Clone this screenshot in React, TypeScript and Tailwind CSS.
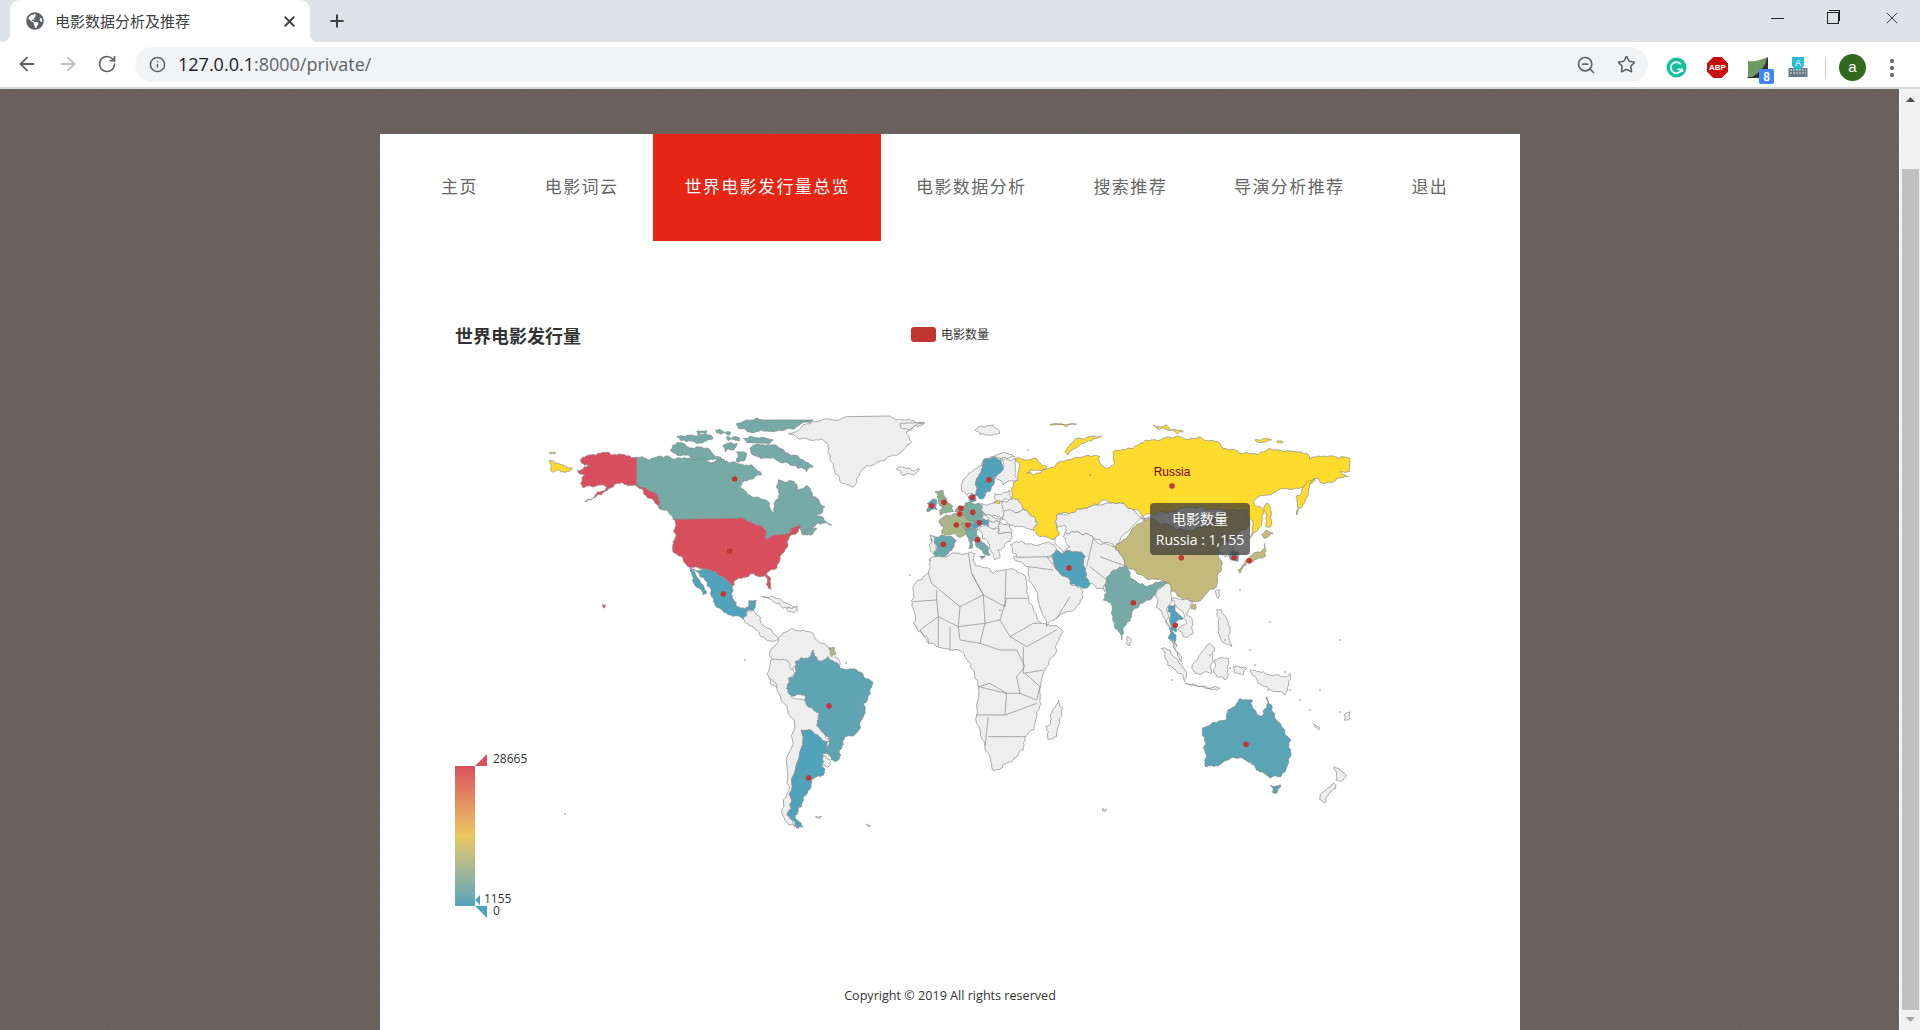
import { ArrowLeft, ArrowRight, RotateCw, Info, ZoomOut, Star, X, Plus } from "lucide-react";
import { FaGlobeAmericas } from "react-icons/fa";

type Shape = { fill: string; pts: string };

const GREY = "#eeeeee";
const RED = "#d94e5d";
const BLUE = "#50a3ba";
const BRAZIL = "#5fa4b3";
const TEAL = "#75aaa7";
const YELLOW = "#ffdb2e";
const OLIVE = "#c2b97a";

// coordinates read off the crops, each group has its own scale
const america: Shape[] = [
    { fill: TEAL, pts: "320,172 360,180 415,168 470,175 530,182 580,180 600,188 650,195 680,210 695,225 655,240 630,262 650,280 690,295 720,310 725,335 735,335 738,300 745,290 740,262 745,240 780,240 800,255 805,270 830,255 850,290 885,320 860,345 905,375 860,370 820,405 810,372 780,395 745,405 710,420 708,392 680,375 625,355 430,358 415,335 385,320 365,295 340,265 320,258" },
    { fill: TEAL, pts: "420,150 445,128 500,140 540,150 585,180 530,180 480,170 430,158" },
    { fill: TEAL, pts: "440,110 480,105 550,115 520,128 470,125" },
    { fill: TEAL, pts: "620,70 700,60 850,60 800,80 730,95 680,95 625,85" },
    { fill: TEAL, pts: "555,90 600,95 600,105 560,100" },
    { fill: TEAL, pts: "640,115 730,120 720,130 650,128" },
    { fill: TEAL, pts: "660,145 690,135 750,145 820,180 850,200 830,215 780,195 720,175 670,165" },
    { fill: TEAL, pts: "580,135 620,130 610,150 585,155" },
    { fill: TEAL, pts: "620,155 650,160 645,180 620,185" },
    { fill: TEAL, pts: "590,110 625,112 630,122 595,122" },
    { fill: TEAL, pts: "500,95 530,92 528,100 503,102" },
    { fill: TEAL, pts: "820,395 860,385 850,400 825,405" },
    { fill: GREY, pts: "775,100 850,65 950,50 1080,48 1120,60 1185,68 1130,95 1145,125 1090,165 1050,185 1000,205 970,260 940,250 915,220 900,165 880,120 820,115" },
    { fill: GREY, pts: "1100,208 1130,205 1170,208 1150,225 1120,228" },
    { fill: RED, pts: "320,172 320,258 290,255 262,250 245,262 215,285 165,305 195,285 232,262 210,255 180,258 157,262 155,245 165,225 142,210 185,200 150,180 180,165 215,158 260,165" },
    { fill: RED, pts: "430,358 625,355 680,375 708,392 710,420 745,405 780,395 810,372 805,395 775,420 765,450 750,470 745,490 710,520 722,550 725,568 715,565 705,525 660,522 625,535 607,560 590,540 565,525 540,510 480,502 440,462 430,430 435,385" },
    { fill: RED, pts: "320,258 345,262 385,300 395,330 365,295 340,272" },
    { fill: RED, pts: "218,612 228,616 224,624 218,620" },
    { fill: YELLOW, pts: "60,180 100,195 128,205 105,218 85,210 62,212" },
    { fill: YELLOW, pts: "60,156 75,156 75,162 60,162" },
    { fill: BLUE, pts: "478,503 540,510 565,525 590,540 607,560 612,600 635,625 655,620 655,603 680,602 672,630 650,635 640,658 610,650 570,625 545,590 510,530 490,510" },
    { fill: BLUE, pts: "482,505 500,530 530,580 520,585 490,535" },
    { fill: GREY, pts: "640,658 650,635 672,632 690,650 705,680 735,705 745,715 730,725 705,715 680,690 650,670" },
    { fill: GREY, pts: "695,590 730,590 770,610 800,620 800,630 760,625 730,605" },
    { fill: GREY, pts: "770,625 800,618 803,632 772,632" },
    { fill: GREY, pts: "745,720 770,695 785,685 810,695 850,700 860,720 905,745 915,770 930,795 800,790 770,850 760,900 720,850 735,790 720,770" },
];

const south: Shape[] = [
    { fill: GREY, pts: "75,60 115,60 135,100 115,135 130,175 195,180 200,260 220,300 210,320 150,270 128,440 115,525 145,565 120,555 102,510 115,430 133,240 100,180 72,115" },
    { fill: GREY, pts: "200,345 222,365 215,382 198,375" },
    { fill: BRAZIL, pts: "135,65 165,55 180,30 190,60 215,50 240,70 245,85 290,95 325,125 320,160 302,190 300,235 288,275 255,290 250,320 232,365 205,340 218,310 215,290 195,265 195,220 160,185 155,165 130,170 113,145 118,115 135,100" },
    { fill: "#b3b67f", pts: "218,25 230,22 235,40 225,50" },
    { fill: BLUE, pts: "150,270 175,270 195,290 215,305 205,340 200,375 205,405 175,420 175,440 155,470 150,500 135,535 155,562 135,555 115,525 128,440" },
    { fill: GREY, pts: "780,180 790,205 775,290 755,298 750,260 765,210" },
    { fill: "#5ba4b5", pts: "1225,175 1255,180 1255,200 1280,228 1290,170 1310,220 1350,300 1350,340 1325,410 1300,415 1265,390 1260,375 1215,355 1170,378 1140,380 1140,340 1132,265 1190,240 1195,210" },
    { fill: "#5ba4b5", pts: "1300,435 1325,435 1315,460 1305,458" },
    { fill: GREY, pts: "1455,380 1485,410 1470,425 1460,420" },
    { fill: GREY, pts: "1455,430 1460,445 1432,490 1420,478" },
    { fill: GREY, pts: "1405,250 1420,262 1418,270 1408,260" },
    { fill: GREY, pts: "1480,225 1495,215 1490,240 1480,240" },
    { fill: GREY, pts: "888,505 898,508 895,514 888,512" },
    { fill: GREY, pts: "185,530 200,530 195,536" },
    { fill: GREY, pts: "310,552 320,558 318,560" },
];

const eurasia: Shape[] = [
    { fill: GREY, pts: "100,440 130,440 205,430 225,430 225,465 280,490 320,480 365,490 372,495 382,530 425,640 490,665 470,720 430,790 420,870 410,920 400,960 377,980 370,1020 340,1050 280,1082 255,1010 230,915 235,830 220,780 175,720 150,720 85,700 40,640 35,570 45,520 85,490" },
    { fill: GREY, pts: "340,440 440,440 460,450 480,490 510,520 550,545 540,580 470,625 440,650 395,520 385,470" },
    { fill: GREY, pts: "465,320 530,300 570,290 650,280 700,300 735,325 645,410 610,400 580,385 530,365 480,370 470,350" },
    { fill: GREY, pts: "480,370 530,365 580,385 645,410 680,470 640,480 620,510 615,545 570,520 555,480 555,440 525,425 490,430 480,410" },
    { fill: "#ffffff", pts: "470,350 495,345 490,380 510,410 490,425 475,410" },
    { fill: GREY, pts: "225,60 280,45 300,70 260,75" },
    { fill: GREY, pts: "0,40 70,38 30,60 5,55" },
    { fill: YELLOW, pts: "345,145 400,145 440,170 380,190 400,195 480,155 500,150 600,140 600,160 620,175 640,165 640,125 700,115 720,100 790,85 900,80 960,100 1020,130 1090,125 1150,125 1220,130 1230,150 1280,140 1350,145 1350,185 1320,185 1345,200 1300,215 1270,222 1245,205 1225,235 1185,235 1130,245 1060,275 1090,300 1085,340 1060,370 1050,385 1055,330 1040,300 975,300 900,290 860,300 800,310 730,320 700,300 650,280 610,270 570,290 530,300 470,315 465,340 480,370 460,390 400,360 415,340 385,310 340,270 335,235 355,205" },
    { fill: YELLOW, pts: "1245,205 1225,250 1190,315 1188,260 1215,225" },
    { fill: YELLOW, pts: "495,125 520,95 605,78 560,95 520,115 505,135" },
    { fill: YELLOW, pts: "760,45 800,45 815,60 770,55" },
    { fill: YELLOW, pts: "815,60 850,65 830,70" },
    { fill: YELLOW, pts: "450,45 530,42 500,50" },
    { fill: YELLOW, pts: "1065,90 1115,90 1090,97" },
    { fill: YELLOW, pts: "1130,95 1150,95 1145,99" },
    { fill: YELLOW, pts: "1095,285 1105,280 1112,350 1098,350" },
    { fill: GREY, pts: "725,325 800,310 900,290 975,300 930,340 850,360 780,345 745,325" },
    { fill: OLIVE, pts: "645,410 680,385 720,340 745,325 780,345 850,360 930,340 975,300 1040,300 1050,345 990,390 955,410 965,480 950,530 890,575 850,570 810,540 800,515 745,510 680,470" },
    { fill: GREY, pts: "955,410 990,390 1005,395 1000,420 975,440" },
    { fill: "#5ba4b5", pts: "1000,420 1015,430 1012,455 993,450" },
    { fill: OLIVE, pts: "1015,480 1050,440 1085,425 1095,400 1095,440 1060,455 1030,470 1020,490" },
    { fill: OLIVE, pts: "1085,375 1100,360 1120,370 1095,385" },
    { fill: BLUE, pts: "445,415 470,420 490,430 525,425 555,440 555,480 570,520 555,535 510,520 480,490 460,450" },
    { fill: TEAL, pts: "640,480 680,470 690,505 740,530 750,525 800,515 770,540 745,570 700,600 680,640 665,690 645,640 635,585 610,570 620,510" },
    { fill: GREY, pts: "680,680 695,690 690,708 680,700" },
    { fill: GREY, pts: "770,545 805,520 815,575 800,600 810,660 790,620 770,590" },
    { fill: GREY, pts: "815,565 880,575 860,610 880,645 880,670 850,680 835,660 860,640 850,610 825,585" },
    { fill: BLUE, pts: "803,590 825,585 850,625 825,640 830,665 815,660 830,710 805,685 810,640" },
    { fill: GREY, pts: "815,690 845,740 845,755 825,720" },
    { fill: GREY, pts: "785,715 810,720 860,800 855,815 820,775" },
    { fill: GREY, pts: "880,760 930,700 945,720 935,790 885,790" },
    { fill: GREY, pts: "855,820 960,835 900,830" },
    { fill: GREY, pts: "945,750 985,745 975,810 950,800" },
    { fill: GREY, pts: "950,600 965,600 990,660 995,710 975,700 955,650" },
    { fill: GREY, pts: "1050,780 1090,785 1160,800 1170,790 1155,855 1100,830 1075,820" },
    { fill: GREY, pts: "1000,770 1040,775 1030,795 1005,790" },
    { fill: GREY, pts: "950,540 962,540 955,565" },
    { fill: OLIVE, pts: "875,585 887,582 885,600 875,598" },
];

const europe: Shape[] = [
    { fill: GREY, pts: "123,45 145,10 190,-25 240,-50 285,-40 240,-35 190,-30 170,25 168,75 140,75" },
    { fill: GREY, pts: "240,-35 285,-35 295,30 250,45 225,25 250,-5" },
    { fill: BLUE, pts: "170,25 190,-30 240,-30 250,-5 220,20 210,65 190,85 168,75" },
    { fill: "#8fb08f", pts: "45,65 65,60 75,80 95,105 100,125 60,135 70,110 55,90" },
    { fill: "#5ba4b5", pts: "22,100 50,90 50,120 22,125" },
    { fill: "#a9b688", pts: "58,150 105,130 130,135 145,150 135,175 145,190 125,200 100,190 75,195 65,190 72,170" },
    { fill: "#77ab9f", pts: "135,100 180,100 190,130 175,155 150,160 145,150 130,135" },
    { fill: "#8daf96", pts: "105,125 115,108 135,105 135,130" },
    { fill: "#93b092", pts: "125,160 150,160 155,175 135,178" },
    { fill: BLUE, pts: "150,160 205,150 205,170 160,175" },
    { fill: "#6fa9a8", pts: "135,178 160,175 175,178 170,195 205,240 210,255 190,250 165,215 145,205" },
    { fill: "#6fa9a8", pts: "145,210 155,210 155,235 146,235" },
    { fill: "#6fa9a8", pts: "178,258 195,258 185,268" },
    { fill: "#65a7ad", pts: "30,197 75,197 110,212 85,245 65,260 42,255 45,220" },
    { fill: GREY, pts: "30,197 43,200 45,225 42,250 30,240" },
    { fill: BLUE, pts: "145,80 165,72 168,92 150,95" },
    { fill: GREY, pts: "185,100 245,95 255,130 245,145 195,135" },
    { fill: GREY, pts: "225,70 270,60 280,90 245,95 225,88" },
    { fill: YELLOW, pts: "220,97 240,93 240,100 222,100" },
    { fill: GREY, pts: "245,95 280,85 315,120 300,125 255,125" },
    { fill: GREY, pts: "250,130 300,125 315,120 350,160 340,180 300,170 270,165 245,150" },
    { fill: GREY, pts: "190,135 245,145 240,155 205,150" },
    { fill: GREY, pts: "205,170 205,150 240,155 235,175 210,180" },
    { fill: GREY, pts: "240,155 270,165 275,190 235,190" },
    { fill: GREY, pts: "175,178 205,170 235,175 235,190 275,190 270,215 235,240 240,262 225,270 210,225" },
    { fill: GREY, pts: "270,225 290,215 340,225 385,215 410,235 385,260 290,262" },
];

const africaBorders =
    "M85 490L95 520L180 590L250 555L215 490L205 430M215 490L250 555L315 590L318 480M320 565L385 565M320 565L300 630L330 680L400 640L425 640M40 575L110 570L115 620L60 660M110 540L110 570M180 590L175 650L115 620M250 555L255 640L175 650M255 640L300 630M175 650L180 690L240 700L255 640M330 680L380 710L470 660M370 710L370 790L430 780M240 700L300 720L350 720L375 770L350 800L360 850L320 850L270 820L235 830M235 830L320 850L315 915L230 915M375 790L420 830L410 870L360 850M315 915L370 895L410 880M265 920L255 1010M265 980L340 980L377 980M60 660L85 700M115 620L115 710M150 650L150 720M440 440L480 490M385 470L460 480M470 625L510 560M580 385L560 470M600 440L680 470M620 510L570 470";

// [x, y] in page pixels
const dots = [
    [734.7, 479], [729.7, 551.3], [723.3, 594], [829, 706], [808.6, 778], [1246, 744.3],
    [1172, 486], [1181.3, 557.7], [1234, 557.7], [1249.3, 560.7], [1069, 568], [1133.3, 602.7], [1175.3, 625.3],
    [931.7, 505.7], [944, 502.3], [961, 508.3], [959.7, 514], [972.7, 512.3], [956.3, 525], [968, 525],
    [979.3, 522.7], [977.7, 539.7], [943.3, 544.3], [972.3, 497.3], [989, 479.7],
];

const specks = [
    [846, 663], [565, 814], [1028, 450], [1240, 590], [1270, 622], [1340, 640], [1300, 700], [1320, 690],
    [1090, 475], [930, 560], [910, 575], [1000, 610], [1255, 665], [1285, 672], [1225, 640], [1250, 650],
    [1268, 690], [1290, 690], [1310, 710], [1340, 712], [1230, 668], [1210, 655], [745, 660], [1172, 680],
];

function noise(a: number, b: number) {
    const v = Math.sin(a * 12.9898 + b * 78.233) * 43758.5453;
    return v - Math.floor(v) - 0.5;
}

// midpoint displacement, so straight edges read as coastline; same result from both ends of a shared edge
function roughen(ax: number, ay: number, bx: number, by: number, depth: number): number[][] {
    const len = Math.hypot(bx - ax, by - ay);
    if (depth === 0 || len < 5) return [];
    const flip = ax > bx || (ax === bx && ay > by);
    const [x0, y0, x1, y1] = flip ? [bx, by, ax, ay] : [ax, ay, bx, by];
    const amp = Math.min(len * 0.22, 7) * noise(x0 + x1, y0 + y1 + depth) * 2;
    const mx = (x0 + x1) / 2 - ((y1 - y0) / len) * amp;
    const my = (y0 + y1) / 2 + ((x1 - x0) / len) * amp;
    return [...roughen(ax, ay, mx, my, depth - 1), [mx, my], ...roughen(mx, my, bx, by, depth - 1)];
}

function coast(pts: string) {
    const list = pts.split(" ").map((p) => p.split(",").map(Number));
    const out: number[][] = [];
    list.forEach(([x, y], i) => {
        const [nx, ny] = list[(i + 1) % list.length];
        const len = Math.hypot(nx - x, ny - y);
        out.push([x, y]);
        // long straight borders stay straight (49th parallel, Alaska)
        const axis = Math.abs(nx - x) < 4 || Math.abs(ny - y) < 4;
        if (!(axis && len > 70)) out.push(...roughen(x, y, nx, ny, 3));
    });
    return out.map(([x, y]) => `${x.toFixed(1)},${y.toFixed(1)}`).join(" ");
}

function ShapeGroup({ shapes, transform }: { shapes: Shape[]; transform: string }) {
    return (
        <g transform={transform}>
            {shapes.map((s, i) => (
                <polygon key={i} points={coast(s.pts)} fill={s.fill} stroke="#8a8a8a" strokeWidth={0.7} strokeLinejoin="round" vectorEffect="non-scaling-stroke" />
            ))}
        </g>
    );
}

function WorldMap() {
    return (
        <svg className="block" width={820} height={435} viewBox="540 405 820 435">
            <ShapeGroup shapes={america} transform="translate(530 400) scale(0.3333)" />
            <ShapeGroup shapes={eurasia} transform="translate(900 410) scale(0.3333)" />
            <g transform="translate(900 410) scale(0.3333)">
                <path d={africaBorders} fill="none" stroke="#8a8a8a" strokeWidth={0.7} vectorEffect="non-scaling-stroke" />
            </g>
            <ShapeGroup shapes={south} transform="translate(740 640) scale(0.4082 0.3333)" />
            <ShapeGroup shapes={europe} transform="translate(920 470) scale(0.3333)" />
            {specks.map(([x, y], i) => (
                <circle key={i} cx={x} cy={y} r={0.8} fill="#8a8a8a" />
            ))}
            {dots.map(([x, y], i) => (
                <circle key={i} cx={x} cy={y} r={2.8} fill="#c23531" />
            ))}
            <text x={1172} y={476} textAnchor="middle" fontSize={12} fill="#800000" fontFamily="'Liberation Sans', sans-serif">
                Russia
            </text>
        </svg>
    );
}

function VisualMap() {
    return (
        <div className="absolute left-[75px] top-[513px] h-[164px] w-[100px] font-['Open_Sans',sans-serif] text-[12px] leading-[12px] text-[#333]">
            <div className="absolute left-0 top-[12px] h-[140px] w-[20px] bg-gradient-to-b from-[#d94e5d] via-[#e8c75f] to-[#50a3ba]" />
            <svg className="absolute left-[20px] top-0" width={12} height={12}><polygon points="0,12 12,12 12,0" fill="#d94e5d" /></svg>
            <span className="absolute left-[38px] top-[-1px]">28665</span>
            <svg className="absolute left-[20px] top-[152px]" width={12} height={12}><polygon points="0,0 12,0 12,12" fill="#50a3ba" /></svg>
            <span className="absolute left-[38px] top-[151px]">0</span>
            <svg className="absolute left-[20px] top-[141px]" width={5} height={10}><polygon points="5,0 0,5 5,10" fill="#50a3ba" /></svg>
            <span className="absolute left-[29px] top-[139px]">1155</span>
        </div>
    );
}

function Chart() {
    return (
        <div className="relative">
            <div className="flex h-[164px] items-start pl-[75px] pt-[85px] font-['Open_Sans','Noto_Sans_CJK_SC',sans-serif]">
                <h2 className="w-[456px] text-[18px] font-bold leading-[20px] text-[#333]">世界电影发行量</h2>
                <div className="flex items-center gap-[5px] pt-[1px] text-[12px] leading-[15px] text-[#333]">
                    <span className="h-[15px] w-[25px] rounded-[3px] bg-[#c23531]" />
                    电影数量
                </div>
            </div>
            <div className="relative ml-[160px] w-[820px]">
                <WorldMap />
                <div className="absolute left-[610px] top-[98px] w-[100px] rounded-[4px] bg-[rgba(50,50,50,0.7)] py-[5px] text-center font-['Open_Sans','Noto_Sans_CJK_SC',sans-serif] text-[14px] leading-[21px] text-white">
                    <div>电影数量</div>
                    <div>Russia : 1,155</div>
                </div>
            </div>
            <VisualMap />
        </div>
    );
}

const navItems = ["主页", "电影词云", "世界电影发行量总览", "电影数据分析", "搜索推荐", "导演分析推荐", "退出"];

function Nav() {
    return (
        <nav className="flex h-[107px] gap-[3px] pl-[29px] font-['Liberation_Serif','Noto_Sans_CJK_SC',serif] text-[17px] tracking-[1.4px]">
            {navItems.map((item, i) => (
                <a
                    key={item}
                    className={
                        i === 2
                            ? "flex items-center bg-[#e62514] px-[31px] text-white"
                            : "flex items-center px-[32px] text-[#666]"
                    }
                >
                    {item}
                </a>
            ))}
        </nav>
    );
}

function Extensions() {
    return (
        <div className="flex items-center">
            <svg className="ml-[18px]" width={21} height={21} viewBox="0 0 21 21">
                <circle cx={10.5} cy={10.5} r={10} fill="#15c39a" />
                <path d="M14.8 7.2a5.6 5.6 0 1 0 .9 5.2h-4.2M15.7 12.4l1 2.4" fill="none" stroke="#fff" strokeWidth={1.8} />
            </svg>
            <div className="ml-[20px] flex h-[21px] w-[21px] items-center justify-center bg-[#c70d0d] font-['Liberation_Sans',sans-serif] text-[8px] font-bold text-white [clip-path:polygon(30%_0,70%_0,100%_30%,100%_70%,70%_100%,30%_100%,0_70%,0_30%)]">
                ABP
            </div>
            <div className="relative ml-[19px] h-[21px] w-[21px]">
                <svg width={21} height={21} viewBox="0 0 21 21">
                    <polygon points="0,21 21,0 21,21" fill="#333" />
                    <path d="M1 4Q12 5 20 0Q19 12 5 20L1 20Z" fill="#6d9a63" />
                </svg>
                <span className="absolute left-[12px] top-[12px] flex h-[15px] w-[15px] items-center justify-center rounded-[2px] bg-[#4285f4] font-['Liberation_Sans',sans-serif] text-[12px] font-bold text-white">8</span>
            </div>
            <svg className="ml-[20px]" width={20} height={21} viewBox="0 0 20 21">
                <rect x={0.5} y={11} width={19} height={9} fill="#6b7a87" />
                <path d="M4 0H16V9L10 14L4 9Z" fill="#29bcd8" />
                <path d="M2 13h16M2 16h16" stroke="#d7dde2" strokeWidth={1} strokeDasharray="2 1" />
                <text x={10} y={9} textAnchor="middle" fontSize={9} fill="#fff" fontFamily="'Liberation Sans', sans-serif">A</text>
            </svg>
            <div className="ml-[17px] h-[20px] w-px bg-[#c9cbce]" />
            <div className="ml-[13px] flex h-[27px] w-[27px] items-center justify-center rounded-full bg-[#33691e] font-['Liberation_Sans',sans-serif] text-[15px] text-white">a</div>
            <div className="ml-[24px] flex flex-col gap-[3px]">
                <span className="h-[4px] w-[4px] rounded-full bg-[#5f6368]" />
                <span className="h-[4px] w-[4px] rounded-full bg-[#5f6368]" />
                <span className="h-[4px] w-[4px] rounded-full bg-[#5f6368]" />
            </div>
        </div>
    );
}

function BrowserChrome() {
    return (
        <header className="shrink-0">
            <div className="flex h-[42px] bg-[#dee1e6] pl-[10px]">
                <div className="relative flex w-[300px] items-center rounded-t-[10px] bg-white pl-[16px] pr-[12px]">
                    <span className="absolute bottom-0 left-[-8px] h-[8px] w-[8px] bg-white">
                        <span className="block h-full w-full rounded-br-[8px] bg-[#dee1e6]" />
                    </span>
                    <span className="absolute bottom-0 right-[-8px] h-[8px] w-[8px] bg-white">
                        <span className="block h-full w-full rounded-bl-[8px] bg-[#dee1e6]" />
                    </span>
                    <FaGlobeAmericas className="text-[18px] text-[#5f6368]" />
                    <span className="ml-[11px] flex-1 font-['Noto_Sans_CJK_SC',sans-serif] text-[15px] text-[#3c4043]">电影数据分析及推荐</span>
                    <X size={17} strokeWidth={2.6} className="text-[#3c4043]" />
                </div>
                <Plus size={20} strokeWidth={2.4} className="ml-[17px] mt-[11px] text-[#3c4043]" />
                <div className="ml-auto flex items-center pb-[6px] text-[#222]">
                    <span className="h-px w-[13px] bg-[#222]" />
                    <span className="relative ml-[43px] h-[12px] w-[12px] border border-[#222]">
                        <span className="absolute left-[1px] top-[-3px] h-[11px] w-[11px] border-r border-t border-[#222]" />
                    </span>
                    <X size={20} strokeWidth={1} className="ml-[43px] mr-[18px]" />
                </div>
            </div>
            <div className="flex h-[47px] items-start border-b-2 border-[#d6d8db] bg-white pt-[5px]">
                <ArrowLeft size={22} strokeWidth={2} className="ml-[16px] mt-[6px] text-[#5f6368]" />
                <ArrowRight size={22} strokeWidth={2} className="ml-[19px] mt-[6px] text-[#bdc1c6]" />
                <RotateCw size={20} strokeWidth={2} className="ml-[18px] mt-[7px] text-[#5f6368]" />
                <div className="ml-[18px] flex h-[35px] w-[1513px] items-center rounded-full bg-[#f1f3f4] pl-[14px] pr-[12px] font-['Open_Sans',sans-serif] text-[18px]">
                    <Info size={17} strokeWidth={2.2} className="text-[#5f6368]" />
                    <span className="ml-[12px] text-[#202124]">127.0.0.1</span>
                    <span className="text-[#5f6368]">:8000/private/</span>
                    <ZoomOut size={20} strokeWidth={2} className="ml-auto text-[#5f6368]" />
                    <Star size={19} strokeWidth={2} className="ml-[21px] text-[#5f6368]" />
                </div>
                <div className="pt-[7px]">
                    <Extensions />
                </div>
            </div>
        </header>
    );
}

function Scrollbar() {
    return (
        <aside className="flex w-[21px] shrink-0 flex-col items-center border-l border-white bg-[#f1f1f1] pt-[8px]">
            <svg width={9} height={5}><polygon points="4.5,0 9,5 0,5" fill="#505050" /></svg>
            <div className="mt-[67px] h-[841px] w-[17px] bg-[#c1c1c1]" />
            <svg className="mt-[7px]" width={9} height={5}><polygon points="0,0 9,0 4.5,5" fill="#a3a3a3" /></svg>
        </aside>
    );
}

export default function App() {
    return (
        <div className="flex h-screen flex-col overflow-hidden">
            <BrowserChrome />
            <div className="flex min-h-0 flex-1">
                <main className="min-w-0 flex-1 overflow-hidden bg-[#6b605c] bg-[repeating-linear-gradient(45deg,#6e625e_0px,#6e625e_1px,#685e5a_1px,#685e5a_2px)] pl-[380px] pt-[45px]">
                    <div className="w-[1140px] bg-white pb-[60px]">
                        <Nav />
                        <Chart />
                        <footer className="mt-[146px] text-center font-['Open_Sans',sans-serif] text-[12.6px] leading-[20px] text-[#333]">
                            Copyright © 2019 All rights reserved
                        </footer>
                    </div>
                </main>
                <Scrollbar />
            </div>
        </div>
    );
}
